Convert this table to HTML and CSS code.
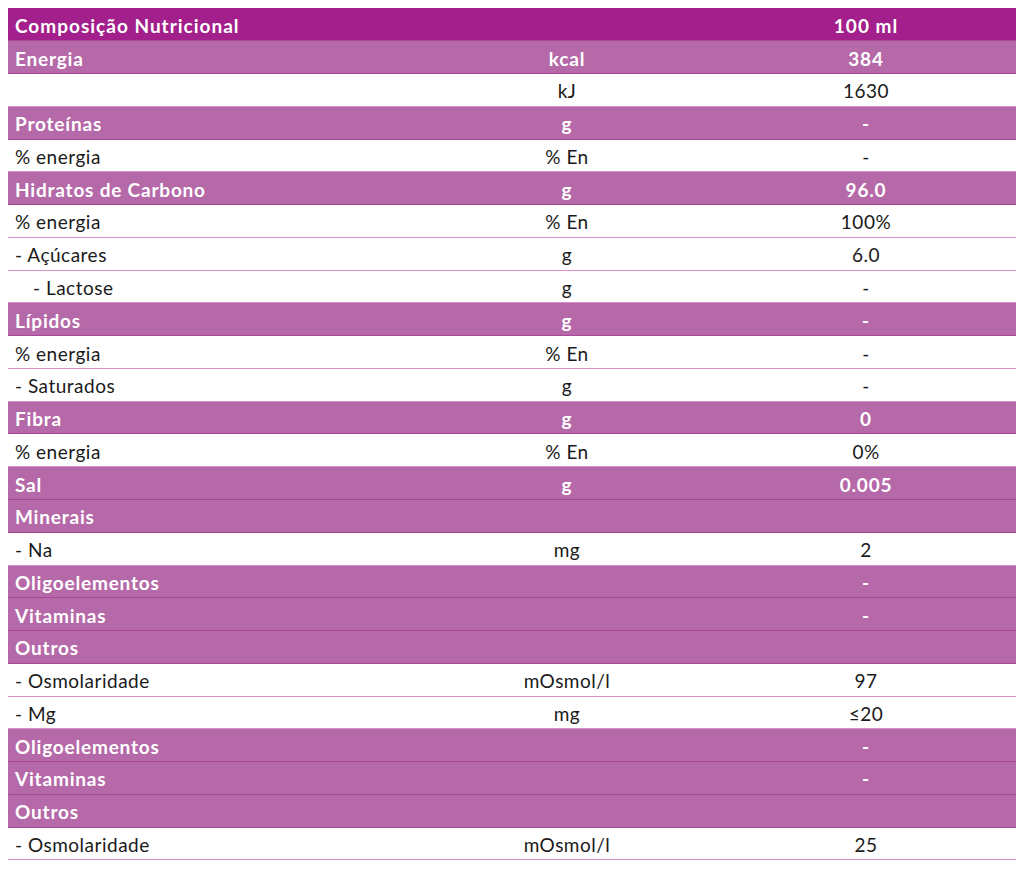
FILE: index.html
```html
<!DOCTYPE html>
<html lang="pt">
<head>
<meta charset="utf-8">
<title>Composição Nutricional</title>
<link rel="stylesheet" href="styles.css">
</head>
<body>
<table class="nutri">
  <colgroup><col class="c1"><col class="c2"><col class="c3"></colgroup>
  <thead>
    <tr class="head"><th>Composição Nutricional</th><th></th><th class="ctr">100 ml</th></tr>
  </thead>
  <tbody>
    <tr class="grp"><td>Energia</td><td>kcal</td><td>384</td></tr>
    <tr><td></td><td>kJ</td><td>1630</td></tr>
    <tr class="grp"><td>Proteínas</td><td>g</td><td>-</td></tr>
    <tr><td>% energia</td><td>% En</td><td>-</td></tr>
    <tr class="grp"><td>Hidratos de Carbono</td><td>g</td><td>96.0</td></tr>
    <tr><td>% energia</td><td>% En</td><td>100%</td></tr>
    <tr><td>- Açúcares</td><td>g</td><td>6.0</td></tr>
    <tr><td class="ind">- Lactose</td><td>g</td><td>-</td></tr>
    <tr class="grp"><td>Lípidos</td><td>g</td><td>-</td></tr>
    <tr><td>% energia</td><td>% En</td><td>-</td></tr>
    <tr><td>- Saturados</td><td>g</td><td>-</td></tr>
    <tr class="grp"><td>Fibra</td><td>g</td><td>0</td></tr>
    <tr><td>% energia</td><td>% En</td><td>0%</td></tr>
    <tr class="grp"><td>Sal</td><td>g</td><td>0.005</td></tr>
    <tr class="grp"><td>Minerais</td><td></td><td></td></tr>
    <tr><td>- Na</td><td>mg</td><td>2</td></tr>
    <tr class="grp"><td>Oligoelementos</td><td></td><td>-</td></tr>
    <tr class="grp"><td>Vitaminas</td><td></td><td>-</td></tr>
    <tr class="grp"><td>Outros</td><td></td><td></td></tr>
    <tr><td>- Osmolaridade</td><td>mOsmol/l</td><td>97</td></tr>
    <tr><td>- Mg</td><td>mg</td><td>≤20</td></tr>
    <tr class="grp"><td>Oligoelementos</td><td></td><td>-</td></tr>
    <tr class="grp"><td>Vitaminas</td><td></td><td>-</td></tr>
    <tr class="grp"><td>Outros</td><td></td><td></td></tr>
    <tr><td>- Osmolaridade</td><td>mOsmol/l</td><td>25</td></tr>
  </tbody>
</table>
</body>
</html>
```
FILE: styles.css
```css
html, body {
  margin: 0;
  padding: 0;
  background: #ffffff;
}
body {
  padding: 8px;
  font-family: Lato, "Open Sans", sans-serif;
  font-size: 19px;
  letter-spacing: 0.5px;
  color: #1a1a1a;
}
.nutri {
  width: 1008px;
  border-collapse: collapse;
  table-layout: fixed;
}
.c1 { width: 410px; }
.c2 { width: 298px; }
.c3 { width: 300px; }
.nutri th,
.nutri td {
  height: 32.77px;
  box-sizing: border-box;
  padding: 3px 7px 0;
  line-height: 20px;
  border-bottom: 1px solid #d98fcb;
  text-align: center;
  vertical-align: middle;
  white-space: nowrap;
}
.nutri th:first-child,
.nutri td:first-child {
  text-align: left;
}
.head th {
  background: #a31f8b;
  color: #ffffff;
  font-weight: 700;
  letter-spacing: 1px;
  border-bottom: 1px solid #a8489a;
}
.grp td {
  background: #b569a8;
  color: #ffffff;
  font-weight: 700;
  letter-spacing: 0.8px;
  border-bottom: 1px solid #a8489a;
}
.ind {
  padding-left: 25px !important;
}
```
